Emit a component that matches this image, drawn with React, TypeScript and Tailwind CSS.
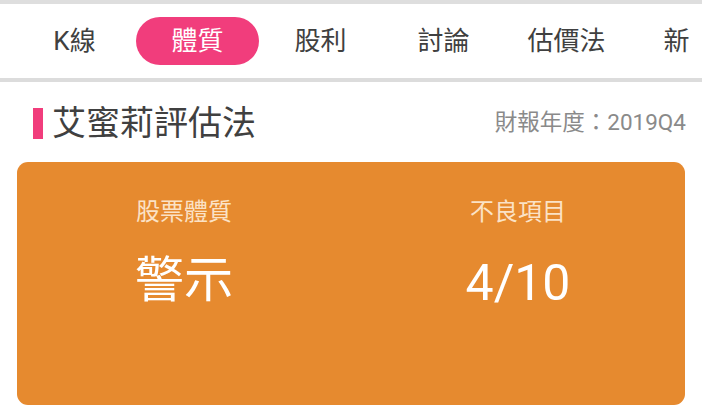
import React from "react";

const font = { fontFamily: '"Roboto", "Noto Sans CJK TC", sans-serif' };

export default function App() {
  const tabs = ["K線", "體質", "股利", "討論", "估價法"];
  return (
    <div className="w-[702px] h-[412px] overflow-hidden bg-white" style={font}>
      <div className="h-[4px] bg-[#dedede]" />
      <div className="h-[74px] flex items-center pl-[13px] overflow-hidden">
        {tabs.map((t, i) => (
          <div key={t} className="w-[123px] shrink-0 h-[48px] flex items-center justify-center">
            {i === 1 ? (
              <div className="w-[123px] h-[48px] rounded-full bg-[#f13d7c] text-white text-[26px] flex items-center justify-center">
                {t}
              </div>
            ) : (
              <span className="text-[26px] text-[#404040]">{t}</span>
            )}
          </div>
        ))}
        <div className="w-[97px] shrink-0 h-[48px] flex items-center justify-center">
          <span className="text-[26px] text-[#404040]">新</span>
        </div>
      </div>
      <div className="h-[4px] bg-[#dcdcdc]" />
      <div className="flex items-center justify-between pl-[33px] pr-[16px] h-[80px] pt-[2px]">
        <div className="flex items-center">
          <div className="w-[10px] h-[31px] bg-[#f13d7c] mr-[9px]" />
          <span className="text-[34px] text-[#404040] leading-none">艾蜜莉評估法</span>
        </div>
        <span className="text-[22.5px] text-[#8a8a8a]">財報年度：2019Q4</span>
      </div>
      <div className="mx-[17px] h-[243px] rounded-[11px] bg-[#e68a2f] grid grid-cols-2">
        <div className="flex flex-col items-center pt-[35px]">
          <span className="text-[24px] text-[#fbe2c6] leading-[30px]">股票體質</span>
          <span className="text-[49px] text-white leading-[60px] mt-[24px]">警示</span>
        </div>
        <div className="flex flex-col items-center pt-[35px]">
          <span className="text-[24px] text-[#fbe2c6] leading-[30px]">不良項目</span>
          <span className="text-[50px] text-white leading-[60px] mt-[26px]">4/10</span>
        </div>
      </div>
    </div>
  );
}
